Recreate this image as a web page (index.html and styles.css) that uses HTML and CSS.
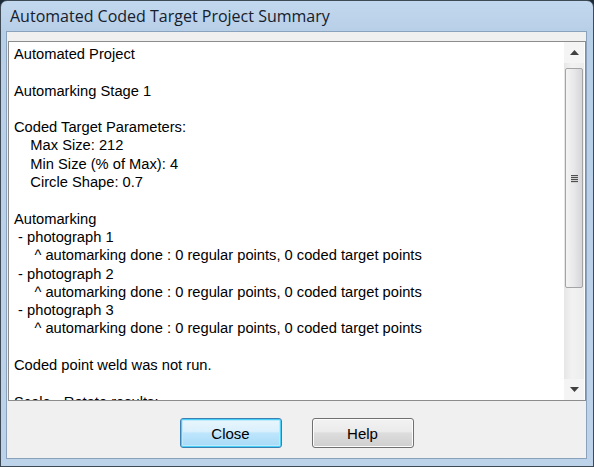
FILE: index.html
```html
<!DOCTYPE html>
<html>
<head>
<meta charset="utf-8">
<link rel="stylesheet" href="styles.css">
</head>
<body>
<div class="window">
  <div class="titlebar">Automated Coded Target Project Summary</div>
  <div class="client">
    <div class="editbox">
      <div class="text">Automated Project

Automarking Stage 1

Coded Target Parameters:
    Max Size: 212
    Min Size (% of Max): 4
    Circle Shape: 0.7

Automarking
 - photograph 1
     ^ automarking done : 0 regular points, 0 coded target points
 - photograph 2
     ^ automarking done : 0 regular points, 0 coded target points
 - photograph 3
     ^ automarking done : 0 regular points, 0 coded target points

Coded point weld was not run.

Scale - Rotate results:
</div>
      <div class="scrollbar">
        <div class="sb-btn"><svg width="9" height="5" viewBox="0 0 9 5"><path d="M0 5 L4.5 0 L9 5 Z" fill="#404040"/></svg></div>
        <div class="sb-track">
          <div class="sb-thumb">
            <div class="grip"><span></span><span></span><span></span><span></span></div>
          </div>
        </div>
        <div class="sb-btn"><svg width="9" height="5" viewBox="0 0 9 5"><path d="M0 0 L9 0 L4.5 5 Z" fill="#404040"/></svg></div>
      </div>
    </div>
    <div class="buttons">
      <div class="btn default">Close</div>
      <div class="btn">Help</div>
    </div>
  </div>
</div>
</body>
</html>
```
FILE: styles.css
```css
html, body {
  margin: 0;
  padding: 0;
  background: #1b2a36;
}
.window {
  width: 594px;
  height: 467px;
  box-sizing: border-box;
  border: 1px solid #3e4a56;
  border-radius: 7px 7px 0 0;
  background: linear-gradient(to bottom, #c2d8ee 0px, #b8cfe8 30px, #bcd3ea 100%);
  display: flex;
  flex-direction: column;
  overflow: hidden;
}
.titlebar {
  height: 30px;
  padding-left: 9px;
  display: flex;
  align-items: center;
  font-family: "Open Sans", "Noto Sans", sans-serif;
  font-size: 16px;
  color: #15202c;
  white-space: nowrap;
}
.client {
  flex: 1;
  margin: 0 6px 7px 5px;
  border: 1px solid #8aa2bc;
  background: #f0f0f0;
  padding: 9px 0 0 1px;
  display: flex;
  flex-direction: column;
}
.editbox {
  width: 578px;
  height: 360px;
  box-sizing: border-box;
  border: 1px solid #8c8c8c;
  background: #ffffff;
  display: flex;
  overflow: hidden;
}
.text {
  flex: 1;
  padding: 3px 0 0 5px;
  font-family: "Liberation Sans", Arial, sans-serif;
  font-size: 14.7px;
  line-height: 18.3px;
  color: #000;
  white-space: pre;
  overflow: hidden;
}
.scrollbar {
  width: 20px;
  margin-right: 1px;
  display: flex;
  flex-direction: column;
  background: linear-gradient(to right, #e6e6e6, #f2f2f2 40%, #ececec);
}
.sb-btn {
  height: 21px;
  display: flex;
  align-items: center;
  justify-content: center;
  background: #f4f4f4;
}
.sb-track {
  flex: 1;
  padding: 5px 1px 0 1px;
}
.sb-thumb {
  height: 220px;
  box-sizing: border-box;
  border: 1px solid #a4a4a4;
  border-radius: 2px;
  background: linear-gradient(to right, #f4f4f4, #e8e8ea 50%, #d6d6d9);
  display: flex;
  align-items: center;
  justify-content: center;
}
.grip {
  display: flex;
  flex-direction: column;
  gap: 1px;
}
.grip span {
  display: block;
  width: 7px;
  height: 1px;
  background: #505050;
  box-shadow: 0 1px 0 #d0d0d0;
}
.buttons {
  margin-top: 17px;
  display: flex;
  justify-content: center;
  gap: 30px;
  padding-right: 1px;
}
.btn {
  width: 102px;
  height: 30px;
  box-sizing: border-box;
  border: 1px solid #707070;
  border-radius: 3px;
  background: linear-gradient(to bottom, #f2f2f2 0%, #ebebeb 45%, #dddddd 50%, #cfcfcf 100%);
  box-shadow: inset 0 0 0 1px #fcfcfc;
  display: flex;
  align-items: center;
  justify-content: center;
  font-family: "Liberation Sans", Arial, sans-serif;
  font-size: 15px;
  color: #000;
}
.btn.default {
  border-color: #3c7fb1;
  box-shadow: inset 0 0 0 1px #48d0f8, inset 0 0 0 2px #bfeafc;
  background: linear-gradient(to bottom, #eaf6fd 0%, #d9f0fc 45%, #bee6fd 50%, #a7d9f5 100%);
}
```
